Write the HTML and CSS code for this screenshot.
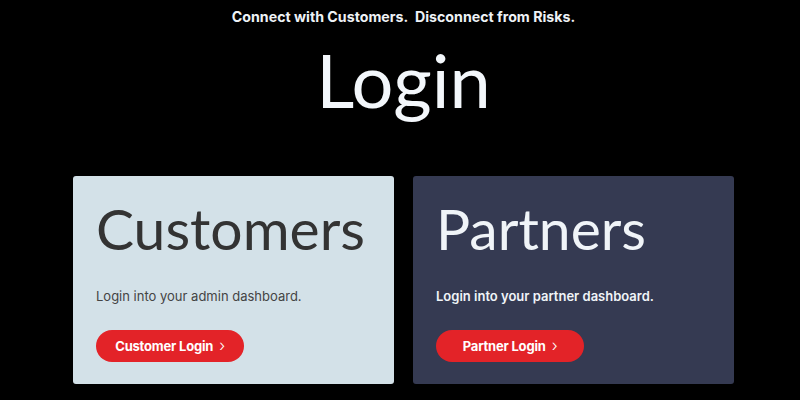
FILE: index.html
```html
<!DOCTYPE html>
<html>
<head>
<meta charset="utf-8">
<link rel="stylesheet" href="styles.css">
</head>
<body>
<div class="page">
  <p class="tagline">Connect with Customers.&nbsp; Disconnect from Risks.</p>
  <h1 class="title">Login</h1>
  <div class="cards">
    <div class="card card-light">
      <h2 class="card-title">Customers</h2>
      <p class="card-text">Login into your admin dashboard.</p>
      <a class="btn" href="#">Customer Login <span class="chev">&#x203A;</span></a>
    </div>
    <div class="card card-dark">
      <h2 class="card-title">Partners</h2>
      <p class="card-text">Login into your partner dashboard.</p>
      <a class="btn" href="#">Partner Login <span class="chev">&#x203A;</span></a>
    </div>
  </div>
</div>
</body>
</html>
```
FILE: styles.css
```css
* { box-sizing: border-box; }
html, body { margin: 0; padding: 0; background: #000; }
body { width: 800px; height: 400px; overflow: hidden; font-family: "Inter", "Noto Sans", sans-serif; }
.page { display: flex; flex-direction: column; align-items: center; padding-left: 7px; }
.tagline { margin: 8px 0 0; color: #eef2f6; font-size: 14.2px; font-weight: 700; line-height: 18px; letter-spacing: 0; }
.title { margin: 14px 0 0; color: #f3f7fb; font-family: "Lato", sans-serif; font-size: 74px; font-weight: 400; line-height: 80px; }
.cards { display: flex; gap: 19px; margin-top: 56px; }
.card { width: 321px; height: 208px; border-radius: 3px; padding: 18px 22px 0 23px; display: flex; flex-direction: column; align-items: flex-start; }
.card-light { background: #d3e1e8; color: #333; }
.card-dark { background: #353a52; color: #f0f4f8; }
.card-title { margin: 0; font-family: "Lato", sans-serif; font-size: 57px; font-weight: 400; line-height: 68px; }
.card-text { margin: 26px 0 0; font-size: 13px; line-height: 16px; }
.card-light .card-text { color: #444; }
.card-dark .card-text { font-weight: 600; }
.btn { margin-top: 26px; height: 32px; width: 148px; border-radius: 16px; background: #e32328; color: #fff; text-decoration: none; font-size: 13px; font-weight: 700; letter-spacing: -0.2px; display: flex; align-items: center; justify-content: center; gap: 6px; }
.chev { font-size: 16px; font-weight: 300; line-height: 1; margin-top: -2px; }
```
